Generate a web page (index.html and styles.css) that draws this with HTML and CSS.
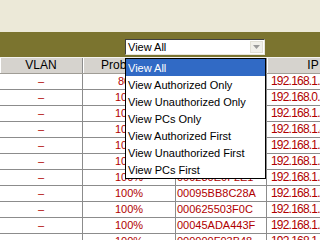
FILE: index.html
```html
<!DOCTYPE html>
<html lang="en">
<head>
    <meta charset="UTF-8">
    <title>Devices</title>
    <link rel="stylesheet" href="styles.css">
</head>
<body>
    <div class="top"></div>

    <div class="toolbar">
        <div class="select">
            <span class="select-value">View All</span>
            <span class="select-arrow">
                <svg width="7" height="4" viewBox="0 0 7 4"><path d="M0 0h7L3.5 4z" fill="#9a9a9a"/></svg>
            </span>
        </div>
        <!-- lista abierta del filtro -->
        <ul class="dropdown">
            <li class="selected">View All</li>
            <li>View Authorized Only</li>
            <li>View Unauthorized Only</li>
            <li>View PCs Only</li>
            <li>View Authorized First</li>
            <li>View Unauthorized First</li>
            <li>View PCs First</li>
        </ul>
    </div>

    <div class="grid">
        <div class="row head">
            <div class="cell">VLAN</div>
            <div class="cell">Probability</div>
            <div class="cell">MAC Address</div>
            <div class="cell">IP</div>
        </div>
        <div class="row"><div class="cell">&ndash;</div><div class="cell">80%</div><div class="cell mac">000D56A1B2C4</div><div class="cell ip">192.168.1.21</div></div>
        <div class="row"><div class="cell">&ndash;</div><div class="cell">100%</div><div class="cell mac">00014A22F01B</div><div class="cell ip">192.168.0.14</div></div>
        <div class="row"><div class="cell">&ndash;</div><div class="cell">100%</div><div class="cell mac">0003BA11C9E2</div><div class="cell ip">192.168.1.33</div></div>
        <div class="row"><div class="cell">&ndash;</div><div class="cell">100%</div><div class="cell mac">000B0D45A7F1</div><div class="cell ip">192.168.1.40</div></div>
        <div class="row"><div class="cell">&ndash;</div><div class="cell">100%</div><div class="cell mac">00065B3E8812</div><div class="cell ip">192.168.1.52</div></div>
        <div class="row"><div class="cell">&ndash;</div><div class="cell">100%</div><div class="cell mac">0010A4C7D30E</div><div class="cell ip">192.168.1.57</div></div>
        <div class="row"><div class="cell">&ndash;</div><div class="cell">100%</div><div class="cell mac">000230E0F2E1</div><div class="cell ip">192.168.1.64</div></div>
        <div class="row"><div class="cell">&ndash;</div><div class="cell">100%</div><div class="cell mac">00095BB8C28A</div><div class="cell ip">192.168.1.71</div></div>
        <div class="row"><div class="cell">&ndash;</div><div class="cell">100%</div><div class="cell mac">000625503F0C</div><div class="cell ip">192.168.1.75</div></div>
        <div class="row"><div class="cell">&ndash;</div><div class="cell">100%</div><div class="cell mac">00045ADA443F</div><div class="cell ip">192.168.1.80</div></div>
        <div class="row"><div class="cell">&ndash;</div><div class="cell">100%</div><div class="cell mac">000000F03B48</div><div class="cell ip">192.168.1.88</div></div>
    </div>
</body>
</html>
```

FILE: styles.css
```css
body {
    margin: 0;
    background: #ece9d8;
    font-family: "Liberation Sans", Arial, sans-serif;
    font-size: 11px;
    overflow: hidden;
}

.top {
    height: 32px;
}

.toolbar {
    position: relative;
    height: 25px;
    background: #7b742f;
    padding: 7px 0 0 125px;
    box-sizing: border-box;
}

.select {
    display: flex;
    width: 140px;
    height: 16px;
    box-sizing: border-box;
    background: #fff;
    border-top: 1px solid #404040;
    border-left: 1px solid #404040;
    border-right: 1px solid #e8e6dc;
    border-bottom: 1px solid #e8e6dc;
}

.select-value {
    flex: 1;
    padding-left: 2px;
    font-size: 11px;
    line-height: 14px;
    color: #000;
}

.select-arrow {
    width: 13px;
    margin: 1px 1px 1px 0;
    background: #f1f0ea;
    box-shadow: inset 0 0 0 1px #e2e0d6;
    display: flex;
    align-items: center;
    justify-content: center;
}

.dropdown {
    position: absolute;
    left: 125px;
    top: 26px;
    width: 141px;
    margin: 0;
    padding: 0;
    list-style: none;
    background: #fff;
    border: 1px solid #000;
    box-sizing: border-box;
    z-index: 2;
}

.dropdown li {
    height: 17px;
    line-height: 18px;
    padding-left: 2px;
    font-size: 11px;
    color: #000;
    white-space: nowrap;
}

.dropdown li.selected {
    background: #316ac5;
    color: #fff;
}

.grid {
    width: 360px;
}

.row {
    display: grid;
    grid-template-columns: 83px 93px 91px 93px;
    height: 16px;
    border-bottom: 1px solid #8c8c8c;
    box-sizing: border-box;
    background: #fff;
}

.cell {
    border-right: 1px solid #8c8c8c;
    text-align: center;
    line-height: 15px;
    color: #b00000;
    white-space: nowrap;
    overflow: hidden;
}

.cell.mac,
.cell.ip {
    text-align: left;
    padding-left: 1px;
}

.cell.ip {
    padding-left: 4px;
    font-size: 12px;
    letter-spacing: -0.8px;
}

.row.head {
    height: 17px;
    background: #d6d3ce;
    border-top: 1px solid #f4f3ee;
    border-bottom: 1px solid #a09d96;
}

.row.head .cell {
    color: #000;
    font-size: 12px;
    border-right: 1px solid #8c8c8c;
    box-shadow: inset 1px 0 #fff;
}
```
